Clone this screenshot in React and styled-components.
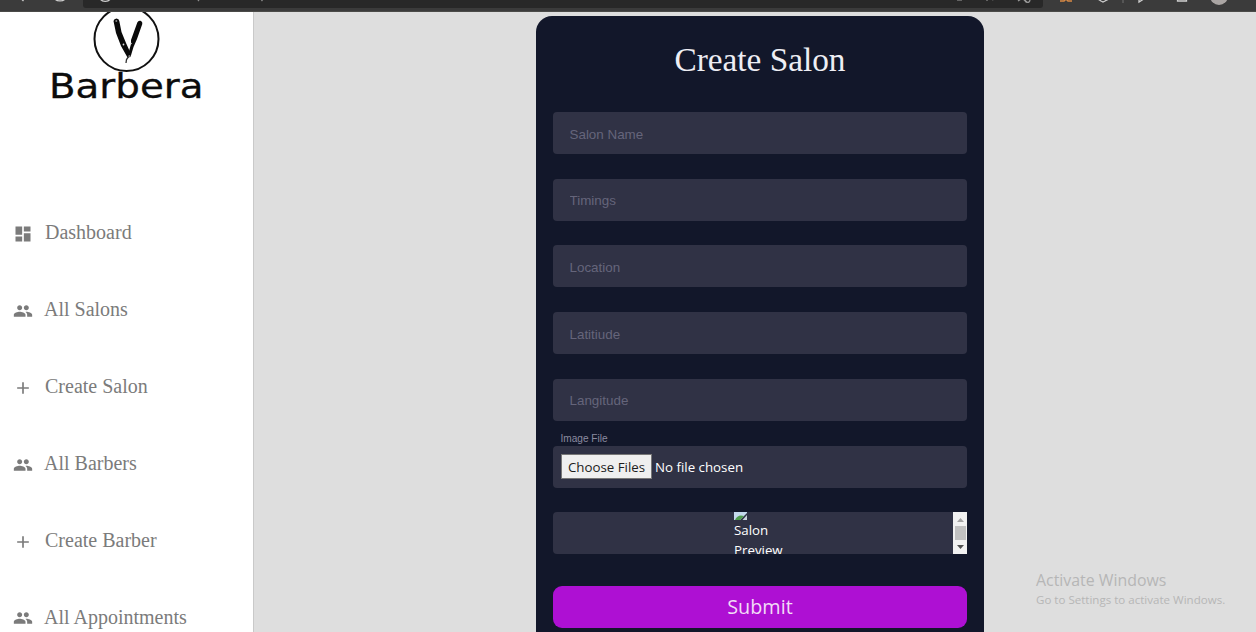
import React from "react";
import styled, { createGlobalStyle } from "styled-components";
import { MdDashboard, MdAdd } from "react-icons/md";

const GlobalStyle = createGlobalStyle`
  * { box-sizing: border-box; }
  body { margin: 0; background: #dedede; overflow: hidden; }
`;

const serif = `"Liberation Serif", "Times New Roman", serif`;
const sans = `"Liberation Sans", Arial, sans-serif`;
const open = `"Open Sans", "Noto Sans", sans-serif`;

const Page = styled.div`
  display: flex;
  flex-direction: column;
  height: 632px;
  overflow: hidden;
`;

const BrowserBar = styled.header`
  flex: none;
  height: 12px;
  background: #3b3b3b;
  svg { display: block; }
`;

const Body = styled.div`
  display: flex;
  flex: 1;
  min-height: 0;
`;

const Sidebar = styled.nav`
  width: 254px;
  flex: none;
  background: #fff;
  border-right: 1px solid #c9c9c9;
  overflow: hidden;
`;

const Logo = styled.svg`
  display: block;
  width: 253px;
  height: 100px;
`;

const Menu = styled.ul`
  list-style: none;
  margin: 0;
  padding: 82px 0 0 13px;
`;

const MenuItem = styled.li`
  display: flex;
  align-items: center;
  height: 76.9px;
  color: #7b7b7b;
  svg { flex: none; width: 20px; height: 20px; margin-top: 3px; }
`;

const MenuText = styled.span`
  margin-left: ${(p) => (p.$tight ? 11 : 12)}px;
  font: 20px/24px ${serif};
  white-space: nowrap;
`;

const Main = styled.main`
  flex: 1;
  display: flex;
  justify-content: flex-start;
  padding: 4px 0 0 282px;
  background: #dedede;
`;

const Card = styled.form`
  flex: none;
  width: 448px;
  height: 660px;
  padding: 0 17px;
  background: #12172a;
  border-radius: 16px;
`;

const Title = styled.h1`
  margin: 0;
  padding-top: 24px;
  height: 96px;
  font: 33.3px/40px ${serif};
  text-align: center;
  color: #eeeef4;
`;

const Input = styled.input`
  display: block;
  width: 414px;
  height: 42px;
  margin: 0 0 24.7px;
  padding: 2px 16.5px 0;
  border: 0;
  border-radius: 4px;
  background: #303245;
  color: #fff;
  font: 13.4px ${sans};
  &::placeholder { color: #65657b; opacity: 1; }
`;

const Label = styled.label`
  display: block;
  height: 25px;
  margin-top: -24.7px;
  padding: 12px 0 0 7.5px;
  font: 10.1px/12px ${sans};
  color: #8b8ba0;
`;

const FileField = styled.div`
  display: flex;
  align-items: center;
  height: 42px;
  padding-left: 8px;
  border-radius: 4px;
  background: #303245;
  color: #fff;
  font: 13.3px/20px ${open};
`;

const FileButton = styled.button`
  width: 91px;
  height: 25px;
  margin-right: 3px;
  padding: 0;
  border: 1px solid #777;
  background: #efefef;
  color: #1c1c1c;
  font: 13.3px/20px ${open};
  white-space: nowrap;
`;

const Preview = styled.div`
  display: flex;
  height: 42px;
  margin-top: 24.5px;
  border-radius: 4px 0 0 4px;
  overflow: hidden;
  background: #303245;
`;

const PreviewBody = styled.div`
  flex: 1;
  padding-left: 181px;
  overflow: hidden;
  color: #fff;
  font: 13.3px/20px ${open};
  svg { display: block; height: 8px; }
`;

const ScrollTrack = styled.svg`
  flex: none;
  width: 14px;
  height: 42px;
`;

const Submit = styled.button`
  display: block;
  width: 414px;
  height: 42px;
  margin-top: 31.5px;
  padding: 0;
  border: 0;
  border-radius: 9px;
  background: #ae10d3;
  color: #f1dcf6;
  font: 19.8px/42px ${open};
`;

const Watermark = styled.aside`
  position: absolute;
  left: 1036px;
  top: 569.5px;
  color: #b6b6b6;
  font-family: ${open};
  white-space: nowrap;
`;

const WatermarkTitle = styled.div`
  font-size: 15.9px;
  line-height: 20px;
`;

const WatermarkText = styled.div`
  font-size: 11.55px;
  line-height: 20px;
`;

function PeopleIcon() {
  return (
    <svg viewBox="0 0 24 24" fill="currentColor">
      <path d="M16 11c1.660 0 2.990-1.340 2.990-3S17.660 5 16 5c-1.660 0-3 1.340-3 3s1.340 3 3 3zm-8 0c1.660 0 2.990-1.340 2.990-3S9.660 5 8 5C6.340 5 5 6.340 5 8s1.340 3 3 3zm0 2c-2.330 0-7 1.170-7 3.500V19h14v-2.500c0-2.330-4.670-3.500-7-3.500zm8 0c-.290 0-.620.020-.970.050 1.160.840 1.970 1.970 1.970 3.450V19h6v-2.500c0-2.330-4.670-3.500-7-3.500z" />
    </svg>
  );
}

const items = [
  ["Dashboard", MdDashboard],
  ["All Salons", PeopleIcon],
  ["Create Salon", MdAdd],
  ["All Barbers", PeopleIcon],
  ["Create Barber", MdAdd],
  ["All Appointments", PeopleIcon],
];

const fields = ["Salon Name", "Timings", "Location", "Latitiude", "Langitude"];

function BrowserIcons() {
  return (
    <svg width="1256" height="12" fill="none" stroke="#cfcfcf" strokeWidth="1.3">
      <path d="M83 0H1043V5Q1043 8 1040 8H86Q83 8 83 5Z" fill="#282828" stroke="none" />
      <path d="M21.5 -1L23.5 1" />
      <path d="M54.5 -1.5A6 4 0 0 0 65.5 -1.5" />
      <path d="M100 -1.5A5.5 4 0 0 0 110.5 -1.5" />
      <path d="M198 1L199.5 -1M261.500 1L263 -1" stroke="#8d8d8d" />
      <path d="M957 0H962M986 0H988M992 0L995 -1" stroke="#777" />
      <path d="M1018 1L1021 -1M1023 -1L1027 2" stroke="#999" />
      <circle cx="1027.500" cy="0" r="2.400" stroke="#999" />
      <path d="M1060 1H1064L1066 -1L1068 1H1072" stroke="#d98a45" strokeWidth="1.500" />
      <path d="M1098.500 -.5L1101 1L1103 2L1105 1L1108 -.5" />
      <path d="M1123 0V3" stroke="#666" />
      <path d="M1139 -1V2L1143 -.5" />
      <path d="M1177.500 -1V1H1186.500V-1" />
      <circle cx="1219" cy="-4" r="9" fill="#aaa5a3" stroke="none" />
      <path d="M0 11.500H1256" stroke="#4b4b48" strokeWidth="1" />
    </svg>
  );
}

function BarberaLogo() {
  return (
    <Logo viewBox="0 12 253 100">
      <circle cx="126.500" cy="39" r="32" fill="none" stroke="#111" strokeWidth="2" />
      <path d="M113.500 21Q114 18.500 116.500 18.500Q119 18.500 119.300 21L121.500 32L126 43L130.500 53V57L127.500 57.500L121 46L116 33Z" fill="#0a0a0a" />
      <path d="M137.300 22.500Q138.200 20.300 140.500 20.800Q142.800 21.500 142.300 24L137 39L133.500 47L130.800 56L128.200 54L131 44V40Z" fill="#0a0a0a" />
      <path d="M129 56L126.500 59.500L126 63" fill="none" stroke="#333" strokeWidth="1.300" />
      <circle cx="116.300" cy="21" r="1" fill="#888" />
      <circle cx="123.500" cy="44.500" r=".9" fill="#ddd" />
      <circle cx="131" cy="43.500" r=".8" fill="#ddd" />
      <circle cx="129.300" cy="56" r=".8" fill="#aaa" />
      <text x="49" y="98" fontFamily="DejaVu Sans" fontSize="33" textLength="154.500" lengthAdjust="spacingAndGlyphs" fill="#0c0c0c" stroke="#0c0c0c" strokeWidth=".3">
        Barbera
      </text>
    </Logo>
  );
}

function BrokenImage() {
  return (
    <svg width="13" height="8" viewBox="0 0 13 8">
      <path d="M0 0H13V1L6 8H0Z" fill="#c4d9ec" />
      <path d="M1 8Q3 3.500 7 3.500L10 4L6 8Z" fill="#4f9d4d" />
      <path d="M13 3V8H8.500Z" fill="#c9d3dc" />
    </svg>
  );
}

export default function App() {
  return (
    <Page>
      <GlobalStyle />
      <BrowserBar>
        <BrowserIcons />
      </BrowserBar>
      <Body>
        <Sidebar>
          <BarberaLogo />
          <Menu>
            {items.map(([name, Icon]) => (
              <MenuItem key={name}>
                <Icon />
                <MenuText $tight={name.startsWith("All")}>{name}</MenuText>
              </MenuItem>
            ))}
          </Menu>
        </Sidebar>
        <Main>
          <Card>
            <Title>Create Salon</Title>
            {fields.map((name) => (
              <Input key={name} placeholder={name} />
            ))}
            <Label>Image File</Label>
            <FileField>
              <FileButton type="button">Choose Files</FileButton>
              <span>No file chosen</span>
            </FileField>
            <Preview>
              <PreviewBody>
                <BrokenImage />
                <div>Salon</div>
                <div>Preview</div>
              </PreviewBody>
              <ScrollTrack viewBox="0 0 14 42">
                <path d="M0 0H14V42H0Z" fill="#f1f1f1" />
                <path d="M2 14H13V28H2Z" fill="#c1c1c1" />
                <path d="M4 10L7.500 6L11 10Z" fill="#a3a3a3" />
                <path d="M4 33L7.500 37L11 33Z" fill="#505050" />
              </ScrollTrack>
            </Preview>
            <Submit type="button">Submit</Submit>
          </Card>
        </Main>
      </Body>
      <Watermark>
        <WatermarkTitle>Activate Windows</WatermarkTitle>
        <WatermarkText>Go to Settings to activate Windows.</WatermarkText>
      </Watermark>
    </Page>
  );
}
